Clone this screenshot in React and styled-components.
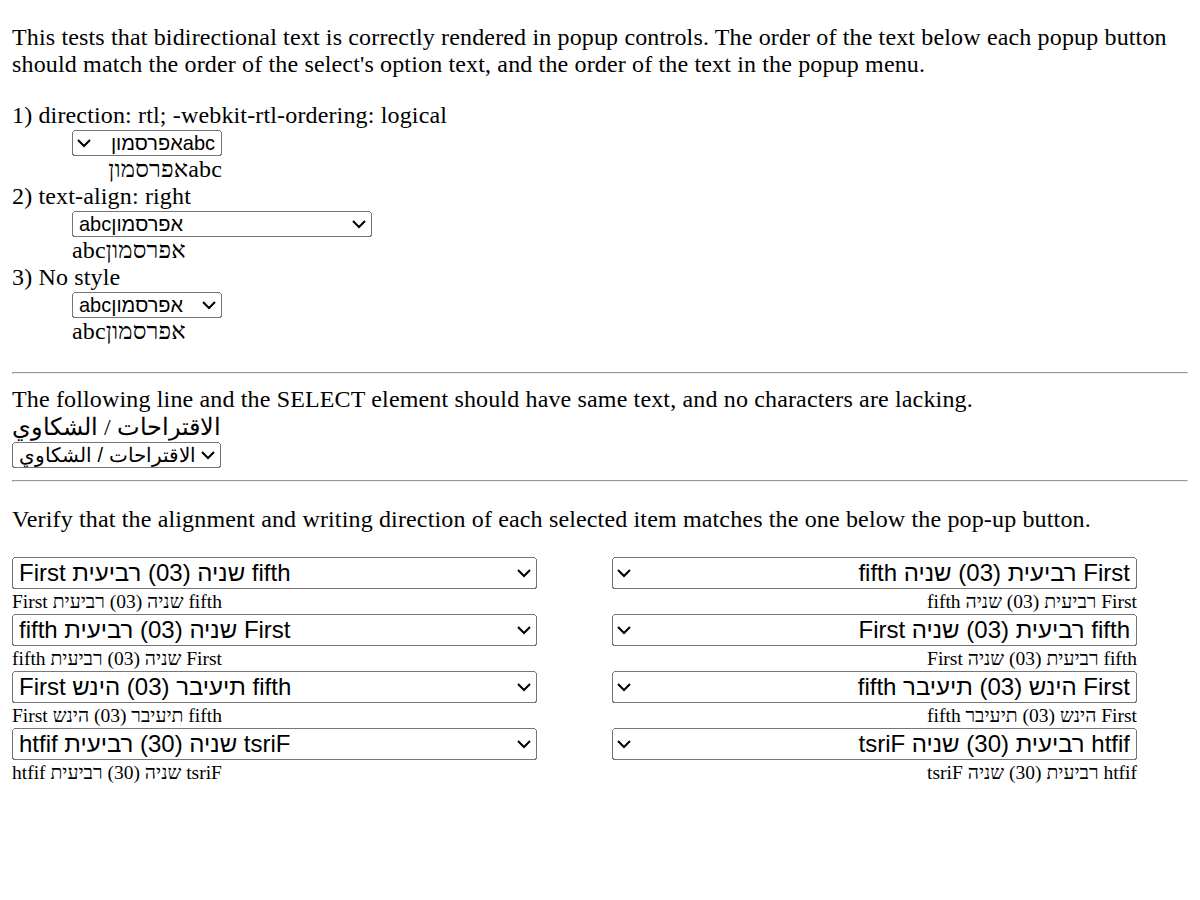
import React from "react";
import styled, { createGlobalStyle } from "styled-components";

const GlobalStyle = createGlobalStyle`
  body {
    margin: 0 8px 8px;
    zoom: 1.5;
    background: #fff;
    color: #000;
    font-family: "Liberation Serif", "Times New Roman", serif;
    font-size: 16px;
    letter-spacing: 0.1px;
  }
`;

const Para = styled.p`
  margin: 16px 0;
`;

const Cases = styled.div`
  margin-bottom: 18px;
`;

const Indent = styled.div`
  margin-left: 40px;
`;

const Popup = styled.select`
  font-family: "Liberation Sans", Arial, sans-serif;
  font-size: ${(p) => (p.$big ? "16px" : "13.333px")};
  letter-spacing: normal;
  width: ${(p) => (p.$width ? `${p.$width}px` : "auto")};
  height: ${(p) => (p.$big ? "21.33px" : "17.33px")};
  color: #000;
`;

const Echo = styled.div`
  width: ${(p) => (p.$width ? `${p.$width}px` : "auto")};
  font-size: ${(p) => (p.$small ? "13px" : "16px")};
  line-height: ${(p) => (p.$small ? "16.67px" : "normal")};
  letter-spacing: ${(p) => (p.$small ? "normal" : "inherit")};
  text-align: ${(p) => p.$align || "start"};
`;

const Bidi = styled.span`
  direction: ${(p) => p.$dir};
  unicode-bidi: ${(p) => (p.$override ? "bidi-override" : "embed")};
`;

const Rule = styled.hr`
  margin: 8px 0;
`;

const Matrix = styled.div`
  display: grid;
  grid-template-columns: 350px 350px;
  column-gap: 50px;
`;

const Cell = styled.div``;

const PEAR = "abcאפרסמון";
const ARABIC = "الاقتراحات / الشكاوي";

// explicit bidi controls so the option keeps the select's own alignment
const LRE = "\u202A";
const RLE = "\u202B";
const PDF = "\u202C";
const LRO = "\u202D";
const RLO = "\u202E";

const SIDES = [
  { side: "left", dir: "ltr", text: "First שניה (03) רביעית fifth" },
  { side: "right", dir: "rtl", text: "fifth רביעית (03) שניה First" },
];

const MODES = [
  { dir: "ltr", override: false },
  { dir: "rtl", override: false },
  { dir: "ltr", override: true },
  { dir: "rtl", override: true },
];

function marked(text, mode) {
  const open = mode.override
    ? mode.dir === "ltr" ? LRO : RLO
    : mode.dir === "ltr" ? LRE : RLE;
  return open + text + PDF;
}

export default function App() {
  return (
    <>
      <GlobalStyle />
      <Para>
        This tests that bidirectional text is correctly rendered in popup controls. The order of the text
        below each popup button should match the order of the select's option text, and the order of the
        text in the popup menu.
      </Para>

      <Cases>
        1) direction: rtl; -webkit-rtl-ordering: logical
        <Indent>
          <Popup $width={100} dir="rtl" defaultValue="a">
            <option value="a">{PEAR}</option>
          </Popup>
          <Echo $width={100} dir="rtl">{PEAR}</Echo>
        </Indent>
        2) text-align: right
        <Indent>
          <Popup $width={200} defaultValue="a">
            <option value="a">{PEAR}</option>
          </Popup>
          <Echo>{PEAR}</Echo>
        </Indent>
        3) No style
        <Indent>
          <Popup $width={100} defaultValue="a">
            <option value="a">{PEAR}</option>
          </Popup>
          <Echo>{PEAR}</Echo>
        </Indent>
      </Cases>

      <Rule />
      The following line and the SELECT element should have same text, and no characters are lacking.
      <div>{ARABIC}</div>
      <Popup defaultValue="a">
        <option value="a">{ARABIC}</option>
      </Popup>
      <Rule />

      <Para>Verify that the alignment and writing direction of each selected item matches the one below the pop-up button.</Para>
      <Matrix>
        {MODES.map((mode, i) =>
          SIDES.map((s) => (
            <Cell key={`${i}-${s.side}`}>
              <Popup $big $width={350} dir={s.dir} defaultValue="a">
                <option value="a">{marked(s.text, mode)}</option>
              </Popup>
              <Echo $small $align={s.side}>
                <Bidi $dir={mode.dir} $override={mode.override}>{s.text}</Bidi>
              </Echo>
            </Cell>
          ))
        )}
      </Matrix>
    </>
  );
}
